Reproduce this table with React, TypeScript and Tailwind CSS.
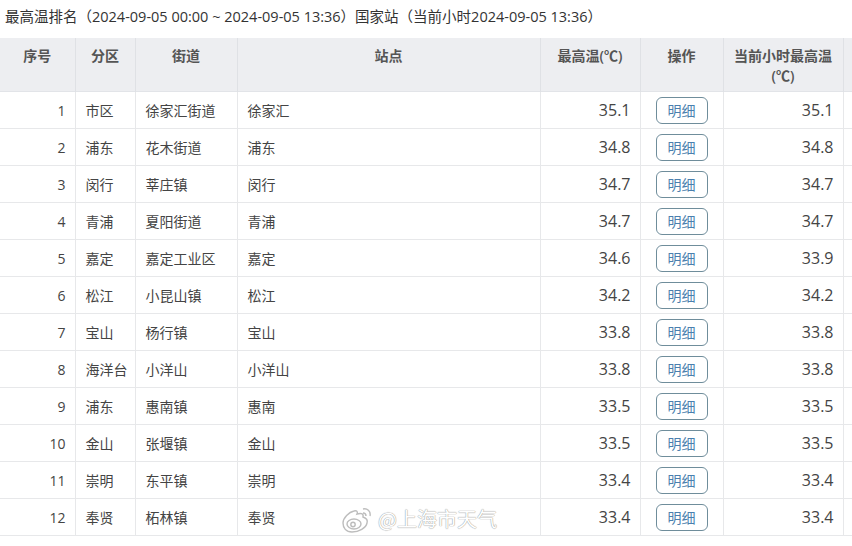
import React from "react";

const rows: [number, string, string, string, string, string][] = [
  [1, "市区", "徐家汇街道", "徐家汇", "35.1", "35.1"],
  [2, "浦东", "花木街道", "浦东", "34.8", "34.8"],
  [3, "闵行", "莘庄镇", "闵行", "34.7", "34.7"],
  [4, "青浦", "夏阳街道", "青浦", "34.7", "34.7"],
  [5, "嘉定", "嘉定工业区", "嘉定", "34.6", "33.9"],
  [6, "松江", "小昆山镇", "松江", "34.2", "34.2"],
  [7, "宝山", "杨行镇", "宝山", "33.8", "33.8"],
  [8, "海洋台", "小洋山", "小洋山", "33.8", "33.8"],
  [9, "浦东", "惠南镇", "惠南", "33.5", "33.5"],
  [10, "金山", "张堰镇", "金山", "33.5", "33.5"],
  [11, "崇明", "东平镇", "崇明", "33.4", "33.4"],
  [12, "奉贤", "柘林镇", "奉贤", "33.4", "33.4"],
];

function WeiboLogo() {
  return (
    <svg width="34" height="28" viewBox="0 0 34 28" fill="none">
      <g stroke="#bdbdbd" strokeWidth="1.4" fill="#ffffff">
        <path d="M3 18c0-5 6-11 11-12 3-1 4 1 3 3 3-1 7-1 6 3 3 1 5 3 4 6-1 5-8 9-15 9C6 27 3 23 3 18z" />
        <ellipse cx="14" cy="19" rx="7" ry="5" />
        <circle cx="13" cy="19.5" r="2.2" />
        <path d="M23 4c4-1 8 2 7 7" fill="none" />
        <path d="M23 8c2 0 3 1 3 3" fill="none" />
      </g>
    </svg>
  );
}

export default function App() {
  const font = "font-['Open_Sans','Noto_Sans_CJK_SC',sans-serif]";
  const th =
    "border-r border-[#dfe1e5] align-top pt-[8px] pb-[5px] px-2 text-[14px] leading-[20px] font-semibold text-[#555] text-center";
  const td = "border-r border-b border-[#e7e8ea] text-[14px] text-[#444] h-[37px] p-0";
  return (
    <div className={`w-[852px] h-[546px] bg-white overflow-hidden relative ${font}`}>
      <div className="h-[38px] pl-[5px] pt-[6px] text-[14.5px] leading-[22px] text-[#333] whitespace-nowrap">
        最高温排名（2024-09-05 00:00 ~ 2024-09-05 13:36）国家站（当前小时2024-09-05 13:36）
      </div>
      <table className="table-fixed border-collapse w-[963px]">
        <colgroup>
          <col className="w-[75px]" />
          <col className="w-[60px]" />
          <col className="w-[102px]" />
          <col className="w-[303px]" />
          <col className="w-[100px]" />
          <col className="w-[83px]" />
          <col className="w-[120px]" />
          <col className="w-[120px]" />
        </colgroup>
        <thead>
          <tr className="bg-[#edeef1] h-[53px] border-b border-[#e2e4e8]">
            <th className={th}>序号</th>
            <th className={th}>分区</th>
            <th className={th}>街道</th>
            <th className={th}>站点</th>
            <th className={th}>最高温(℃)</th>
            <th className={th}>操作</th>
            <th className={th}>
              当前小时最高温
              <br />
              (℃)
            </th>
            <th className={th}>&nbsp;</th>
          </tr>
        </thead>
        <tbody>
          {rows.map((r) => (
            <tr key={r[0]} className="h-[37px]">
              <td className={`${td} text-right pr-[9px] text-[14.5px]`}>{r[0]}</td>
              <td className={`${td} pl-[10px]`}>{r[1]}</td>
              <td className={`${td} pl-[10px]`}>{r[2]}</td>
              <td className={`${td} pl-[10px]`}>{r[3]}</td>
              <td className={`${td} text-right pr-[9px] text-[16px]`}>{r[4]}</td>
              <td className={`${td} text-center`}>
                <span className="inline-flex items-center justify-center w-[52px] h-[27px] rounded-[6px] border border-[#6f8d9b] text-[#4a7fae] text-[14px] align-middle">
                  明细
                </span>
              </td>
              <td className={`${td} text-right pr-[9px] text-[16px]`}>{r[5]}</td>
              <td className={td}></td>
            </tr>
          ))}
        </tbody>
      </table>
      <div className="absolute left-[340px] top-[505px] flex items-center gap-[4px] pointer-events-none">
        <WeiboLogo />
        <span className="text-[20px] leading-[28px] text-white font-['Noto_Sans_CJK_SC',sans-serif] [text-shadow:0_0_1px_#9a9a9a,0_0_1px_#9a9a9a]">
          @上海市天气
        </span>
      </div>
    </div>
  );
}
